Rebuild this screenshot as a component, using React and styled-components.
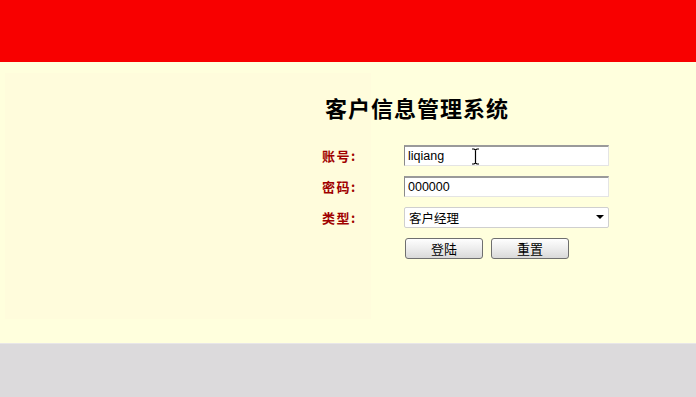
import React from "react";
import styled, { createGlobalStyle } from "styled-components";

const GlobalStyle = createGlobalStyle`
  html, body {
    margin: 0;
    padding: 0;
    height: 100%;
    background: #dcdadc;
    font-family: "Liberation Sans", "Noto Sans CJK SC", sans-serif;
  }
  #root {
    height: 100%;
  }
`;

const Page = styled.div`
  display: flex;
  flex-direction: column;
  height: 100%;
`;

const TopBar = styled.div`
  height: 62px;
  background: #f80000;
  flex-shrink: 0;
`;

const Main = styled.div`
  height: 281px;
  background: #ffffdd;
  display: grid;
  grid-template-columns: 5px 317px 49px 1fr;
  grid-template-rows: 1fr;
  flex-shrink: 0;
`;

const SidePanel = styled.div`
  grid-column: 2 / 4;
  grid-row: 1;
  margin-top: 11px;
  height: 246px;
  background: #fffcdc;
`;

const Form = styled.div`
  grid-column: 3 / 5;
  grid-row: 1;
  display: flex;
  flex-direction: column;
  gap: 10px;
  padding-top: 30px;
`;

const Title = styled.h1`
  margin: 0 0 13px 3px;
  font-family: "Noto Sans CJK SC", sans-serif;
  font-size: 22px;
  line-height: 30px;
  font-weight: bold;
  color: #000;
  letter-spacing: 1px;
`;

const Row = styled.div`
  display: flex;
  align-items: center;
  height: 21px;
`;

const Label = styled.label`
  width: 82px;
  font-family: "Noto Sans CJK SC", sans-serif;
  font-size: 13px;
  font-weight: bold;
  color: #a00000;
  letter-spacing: 1.5px;
`;

const Field = styled.div`
  position: relative;
  width: 205px;
  height: 21px;
`;

const TextInput = styled.input`
  box-sizing: border-box;
  width: 100%;
  height: 100%;
  margin: 0;
  padding: 0 3px;
  border: 1px solid;
  border-top-width: 2px;
  border-color: #9a9a9a #e4e4e4 #e4e4e4 #8a8a8a;
  background: #fff;
  font-family: "Liberation Sans", sans-serif;
  font-size: 12.5px;
  color: #000;
  outline: none;
`;

const Select = styled.select`
  box-sizing: border-box;
  width: 100%;
  height: 100%;
  margin: 0;
  padding: 0 4px;
  appearance: none;
  border: 1px solid #cfcfcf;
  border-radius: 2px;
  background: #fff;
  font-family: "Noto Sans CJK SC", sans-serif;
  font-size: 12.5px;
  color: #000;
  outline: none;
`;

const Arrow = styled.span`
  position: absolute;
  right: 5px;
  top: 8px;
  width: 0;
  height: 0;
  border-left: 4px solid transparent;
  border-right: 4px solid transparent;
  border-top: 4px solid #000;
  pointer-events: none;
`;

const Cursor = styled.svg`
  position: absolute;
  left: 67px;
  top: 3px;
  pointer-events: none;
`;

const Buttons = styled.div`
  display: flex;
  gap: 8px;
  margin-left: 83px;
`;

const Button = styled.button`
  box-sizing: border-box;
  width: 78px;
  height: 21px;
  margin: 0;
  padding: 0;
  border: 1px solid #6f6f6f;
  border-radius: 3px;
  background: linear-gradient(#fefefe, #ededed 50%, #d9d9d9);
  font-family: "Noto Sans CJK SC", sans-serif;
  font-size: 13px;
  color: #000;
`;

const Footer = styled.div`
  flex: 1;
  background: #dcdadc;
  border-top: 1px solid #e8e6e8;
`;

const App = () => {
  return (
    <Page>
      <GlobalStyle />
      <TopBar />
      <Main>
        <SidePanel />
        <Form>
          <Title>客户信息管理系统</Title>
          <Row>
            <Label>账号:</Label>
            <Field>
              <TextInput defaultValue="liqiang" />
              <Cursor width="9" height="17" viewBox="0 0 9 17">
                <path d="M1 1h2l1.5 1L6 1h2M4.5 2v13M1 16h2l1.5-1L6 16h2" fill="none" stroke="#000" strokeWidth="1.2" />
              </Cursor>
            </Field>
          </Row>
          <Row>
            <Label>密码:</Label>
            <Field>
              <TextInput defaultValue="000000" />
            </Field>
          </Row>
          <Row>
            <Label>类型:</Label>
            <Field>
              <Select defaultValue="manager">
                <option value="manager">客户经理</option>
                <option value="admin">管理员</option>
              </Select>
              <Arrow />
            </Field>
          </Row>
          <Buttons>
            <Button>登陆</Button>
            <Button>重置</Button>
          </Buttons>
        </Form>
      </Main>
      <Footer />
    </Page>
  );
};

export default App;
